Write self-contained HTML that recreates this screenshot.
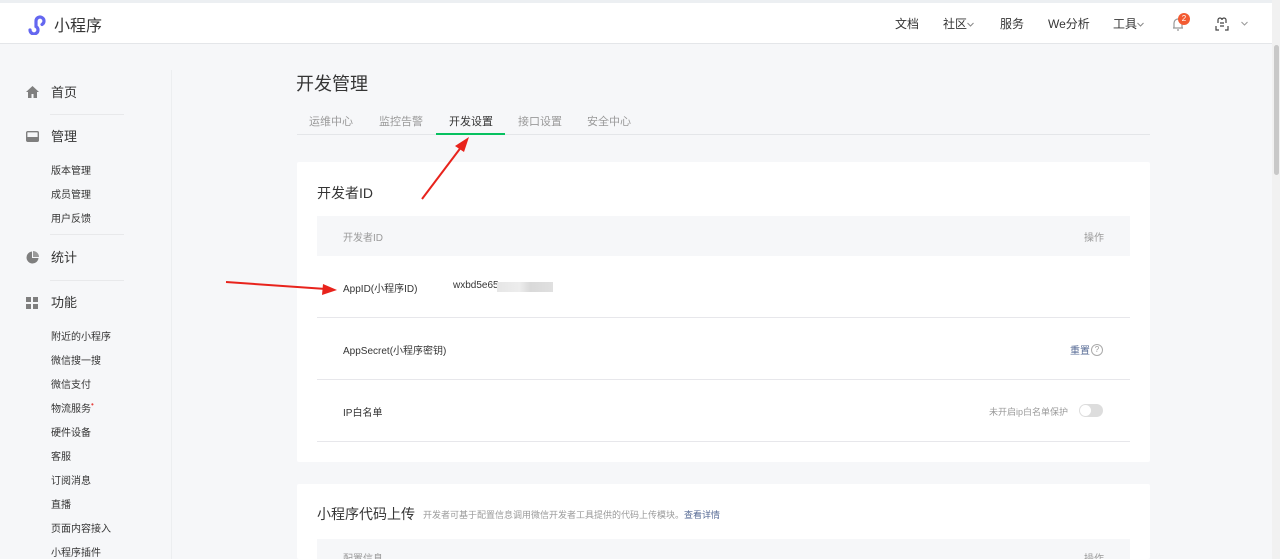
<!DOCTYPE html>
<html><head><meta charset="utf-8"><style>
*{margin:0;padding:0;box-sizing:border-box}
html,body{width:1280px;height:559px;overflow:hidden}
body{background:#f6f7f9;font-family:"Liberation Sans","Noto Sans CJK SC",sans-serif;color:#353535;position:relative}
.abs{position:absolute}
.hdr{position:absolute;left:0;top:0;width:1272px;height:44px;background:#fff;border-top:3px solid #eceff2;border-bottom:1px solid #e4e6e9}
.nav{font-size:12px;color:#353535;top:12px}
.side{font-size:13px;color:#353535}
.sub{font-size:10px;color:#353535}
.sep{position:absolute;left:50px;width:74px;height:1px;background:#e8e9eb}
.card{position:absolute;left:297px;width:853px;background:#fff;border-radius:2px}
.row{position:absolute;left:20px;width:813px;border-bottom:1px solid #e7e7eb;height:62px}
.cell{position:absolute;font-size:10px;color:#353535}
.chev{position:absolute}
</style></head><body>
<div class="hdr">
  <svg class="abs" style="left:26px;top:10px" width="22" height="22" viewBox="0 0 22 22"><path d="M4 17a4 4 0 1 0 6-3.5V8a4 4 0 1 1 6 3.5" fill="none" stroke="#6467f0" stroke-width="3.2" stroke-linecap="round"/></svg>
  <div class="abs" style="left:54px;top:9px;font-size:16px;color:#353535">小程序</div>
  <div class="abs nav" style="left:895px">文档</div>
  <div class="abs nav" style="left:943px">社区</div>
  <svg class="chev" style="left:967px;top:19px" width="7" height="5" viewBox="0 0 7 5"><path d="M0.5 1l3 3 3-3" fill="none" stroke="#888"/></svg>
  <div class="abs nav" style="left:1000px">服务</div>
  <div class="abs nav" style="left:1048px">We分析</div>
  <div class="abs nav" style="left:1113px">工具</div>
  <svg class="chev" style="left:1137px;top:19px" width="7" height="5" viewBox="0 0 7 5"><path d="M0.5 1l3 3 3-3" fill="none" stroke="#888"/></svg>
  <svg class="abs" style="left:1171px;top:14px" width="14" height="14" viewBox="0 0 14 14"><path d="M3 11V6a4 4 0 0 1 8 0v5zM2 11h10M6 13h2" fill="none" stroke="#999" stroke-width="1.2"/></svg>
  <div class="abs" style="left:1178px;top:10px;width:12px;height:12px;border-radius:6px;background:#f35b32;color:#fff;font-size:8px;text-align:center;line-height:12px">2</div>
  <svg class="abs" style="left:1215px;top:13px" width="14" height="16" viewBox="0 0 14 16"><path d="M3 4a2 2 0 0 1 4 0M7 4a2 2 0 0 1 4 0M3 4v3M11 4v3M5 7h4M1 10v4h3M13 10v4h-3M5 10h4" fill="none" stroke="#444" stroke-width="1.2"/></svg>
  <svg class="chev" style="left:1241px;top:18px" width="7" height="5" viewBox="0 0 7 5"><path d="M0.5 1l3 3 3-3" fill="none" stroke="#999"/></svg>
</div>
<div class="abs" style="left:1272px;top:0;width:8px;height:559px;background:#f1f1f1"></div>
<div class="abs" style="left:1274px;top:45px;width:5px;height:130px;background:#c8c8c8;border-radius:3px"></div>
<div class="abs" style="left:171px;top:70px;width:1px;height:489px;background:#eceef0"></div>

<svg class="abs" style="left:26px;top:86px" width="13" height="12" viewBox="0 0 13 12"><path d="M6.5 0L0 6h2v6h3.5V8h2v4H11V6h2z" fill="#7f7f7f"/></svg>
<div class="abs side" style="left:51px;top:82px">首页</div>
<div class="sep" style="top:114px"></div>
<svg class="abs" style="left:26px;top:131px" width="13" height="11" viewBox="0 0 13 11"><rect x="0.7" y="0.7" width="11.6" height="9.6" rx="1" fill="none" stroke="#7f7f7f" stroke-width="1.4"/><rect x="1" y="6" width="11" height="4.5" fill="#7f7f7f"/></svg>
<div class="abs side" style="left:51px;top:126px">管理</div>
<div class="abs sub" style="left:51px;top:162px">版本管理</div>
<div class="abs sub" style="left:51px;top:186px">成员管理</div>
<div class="abs sub" style="left:51px;top:210px">用户反馈</div>
<div class="sep" style="top:234px"></div>
<svg class="abs" style="left:26px;top:251px" width="13" height="13" viewBox="0 0 13 13"><path d="M6 0.5A6 6 0 1 0 12.5 7H6z" fill="#7f7f7f"/><path d="M7 0a6 6 0 0 1 6 6H7z" fill="#9a9a9a"/></svg>
<div class="abs side" style="left:51px;top:247px">统计</div>
<div class="sep" style="top:280px"></div>
<svg class="abs" style="left:26px;top:297px" width="12" height="12" viewBox="0 0 12 12" fill="#7f7f7f"><rect width="5" height="5"/><rect x="7" width="5" height="5"/><rect y="7" width="5" height="5"/><rect x="7" y="7" width="5" height="5"/></svg>
<div class="abs side" style="left:51px;top:292px">功能</div>
<div class="abs sub" style="left:51px;top:328px">附近的小程序</div>
<div class="abs sub" style="left:51px;top:352px">微信搜一搜</div>
<div class="abs sub" style="left:51px;top:376px">微信支付</div>
<div class="abs sub" style="left:51px;top:400px">物流服务<span style="color:#e64340;font-size:8px;vertical-align:top">•</span></div>
<div class="abs sub" style="left:51px;top:424px">硬件设备</div>
<div class="abs sub" style="left:51px;top:448px">客服</div>
<div class="abs sub" style="left:51px;top:472px">订阅消息</div>
<div class="abs sub" style="left:51px;top:496px">直播</div>
<div class="abs sub" style="left:51px;top:520px">页面内容接入</div>
<div class="abs sub" style="left:51px;top:544px">小程序插件</div>

<div class="abs" style="left:296px;top:70px;font-size:18px;color:#353535">开发管理</div>
<div class="abs" style="left:297px;top:134px;width:853px;height:1px;background:#e4e6e9"></div>
<div class="abs" style="left:309px;top:113px;font-size:11px;color:#9a9a9a">运维中心</div>
<div class="abs" style="left:379px;top:113px;font-size:11px;color:#9a9a9a">监控告警</div>
<div class="abs" style="left:449px;top:113px;font-size:11px;color:#353535">开发设置</div>
<div class="abs" style="left:436px;top:133px;width:69px;height:2px;background:#07c160"></div>
<div class="abs" style="left:518px;top:113px;font-size:11px;color:#9a9a9a">接口设置</div>
<div class="abs" style="left:587px;top:113px;font-size:11px;color:#9a9a9a">安全中心</div>

<div class="card" style="top:162px;height:300px">
  <div class="abs" style="left:20px;top:21px;font-size:14px">开发者ID</div>
  <div class="abs" style="left:20px;top:54px;width:813px;height:40px;background:#f6f7f9"></div>
  <div class="cell" style="left:46px;top:67px;color:#9a9a9a">开发者ID</div>
  <div class="cell" style="left:787px;top:67px;color:#9a9a9a">操作</div>
  <div class="row" style="top:94px"></div>
  <div class="cell" style="left:46px;top:118px">AppID(小程序ID)</div>
  <div class="cell" style="left:156px;top:118px">wxbd5e65</div>
  <div class="abs" style="left:200px;top:120px;width:56px;height:10px;background:linear-gradient(90deg,#e6e6e6,#ededed 40%,#d9d9d9 60%,#e0e0e0)"></div>
  <div class="row" style="top:156px"></div>
  <div class="cell" style="left:46px;top:180px">AppSecret(小程序密钥)</div>
  <div class="cell" style="left:773px;top:180px;color:#576b95">重置</div>
  <div class="abs" style="left:794px;top:182px;width:12px;height:12px;border:1px solid #aaa;border-radius:6px;font-size:8px;text-align:center;line-height:10px;color:#999">?</div>
  <div class="row" style="top:218px"></div>
  <div class="cell" style="left:46px;top:242px">IP白名单</div>
  <div class="cell" style="left:692px;top:243px;color:#9a9a9a;font-size:9px">未开启ip白名单保护</div>
  <div class="abs" style="left:782px;top:242px;width:24px;height:13px;border-radius:7px;background:#ddd"><div style="position:absolute;left:1px;top:1px;width:11px;height:11px;border-radius:6px;background:#fff"></div></div>
</div>

<div class="card" style="top:484px;height:75px">
  <div class="abs" style="left:20px;top:20px;font-size:14px">小程序代码上传</div>
  <div class="abs" style="left:126px;top:24px;font-size:9px;color:#9a9a9a">开发者可基于配置信息调用微信开发者工具提供的代码上传模块。<span style="color:#576b95">查看详情</span></div>
  <div class="abs" style="left:20px;top:55px;width:813px;height:40px;background:#f6f7f9"></div>
  <div class="cell" style="left:46px;top:66px;color:#9a9a9a">配置信息</div>
  <div class="cell" style="left:787px;top:66px;color:#9a9a9a">操作</div>
</div>

<svg class="abs" style="left:0;top:0" width="1280" height="559">
  <line x1="422" y1="199" x2="462" y2="146" stroke="#e8231c" stroke-width="2"/>
  <path d="M469 137L455 146L464 152z" fill="#e8231c"/>
  <line x1="226" y1="282" x2="326" y2="289" stroke="#e8231c" stroke-width="2"/>
  <path d="M337 290L323 284L322 295z" fill="#e8231c"/>
</svg>
</body></html>
